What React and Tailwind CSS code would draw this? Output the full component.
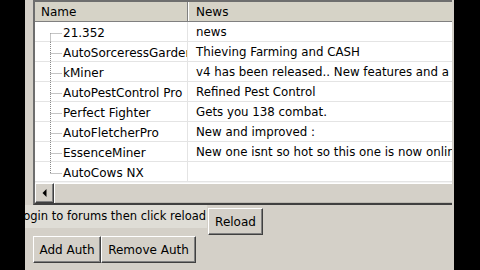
import React from 'react';

const rows = [
  { name: '21.352', news: 'news' },
  { name: 'AutoSorceressGarden', news: 'Thieving Farming and CASH' },
  { name: 'kMiner', news: 'v4 has been released.. New features and a lot more' },
  { name: 'AutoPestControl Pro', news: 'Refined Pest Control' },
  { name: 'Perfect Fighter', news: 'Gets you 138 combat.' },
  { name: 'AutoFletcherPro', news: 'New and improved :' },
  { name: 'EssenceMiner', news: 'New one isnt so hot so this one is now online' },
  { name: 'AutoCows NX', news: '' },
];

// dotted tree connector for one row
const TreeLine = ({ first, last }) => (
  <svg width="28" height="20" className="shrink-0">
    <line
      x1="15.5"
      y1={first ? 11.5 : 0}
      x2="15.5"
      y2={last ? 11.5 : 20}
      stroke="#8a8a8a"
      strokeDasharray="1 1"
    />
    <line x1="15.5" y1="11.5" x2="27" y2="11.5" stroke="#8a8a8a" strokeDasharray="1 1" />
  </svg>
);

const Win98Button = ({ children, className = '' }) => (
  <button
    className={`bg-[#d4d0c8] border border-t-white border-l-white border-r-[#404040] border-b-[#404040] shadow-[inset_-1px_-1px_0_#808080] text-black text-[12px] flex items-center justify-center ${className}`}
  >
    {children}
  </button>
);

export default function App() {
  return (
    <div
      className="w-[480px] h-[270px] bg-black flex overflow-hidden"
      style={{ fontFamily: '"DejaVu Sans", Verdana, sans-serif' }}
    >
      <div className="w-[25px] shrink-0 bg-black" />

      <div className="w-[429px] shrink-0 h-full bg-[#d4d0c8] flex flex-col overflow-hidden">
        {/* list view */}
        <div className="ml-[8px] mr-[2px] h-[205px] shrink-0 flex flex-col bg-white border-t-2 border-l-2 border-b-2 border-t-[#6e6e6e] border-l-[#6e6e6e] border-b-[#404040] overflow-hidden">
          {/* header */}
          <div className="h-[20px] shrink-0 flex bg-[#d6d3c7] border-b border-b-[#808080] text-[12px] text-black">
            <div className="w-[153px] shrink-0 flex items-center pt-px pl-[6px] border-r border-r-[#808080]">Name</div>
            <div className="flex-1 flex items-center pt-px pl-[7px] border-l border-l-white">News</div>
          </div>

          {/* rows */}
          <div className="h-[160px] shrink-0 flex flex-col text-black">
            {rows.map((r, i) => (
              <div key={i} className="h-[20px] shrink-0 flex shadow-[inset_0_-1px_0_#e4e4e4]">
                <div className="w-[153px] shrink-0 flex items-center overflow-hidden whitespace-nowrap border-r border-r-[#e4e4e4] text-[12px]">
                  <TreeLine first={i === 0} last={i === rows.length - 1} />
                  <span className="pt-[2px]">{r.name}</span>
                </div>
                <div className="flex-1 flex items-center pt-[2px] pl-[8px] overflow-hidden whitespace-nowrap text-[11.8px]">{r.news}</div>
              </div>
            ))}
          </div>

          {/* horizontal scrollbar */}
          <div className="h-[21px] shrink-0 flex border-t border-t-[#f4f4f4]">
            <div className="w-[19px] shrink-0 bg-[#d4d0c8] border border-t-white border-l-white border-r-[#404040] border-b-[#404040] shadow-[inset_-1px_-1px_0_#808080] flex items-center justify-center">
              <svg width="5" height="8" viewBox="0 0 5 8">
                <path d="M4.5 0 L0.5 4 L4.5 8 Z" fill="#000" />
              </svg>
            </div>
            <div className="flex-1 bg-[#d4d0c8] border-t border-l border-t-white border-l-white shadow-[inset_0_-1px_0_#bdbab2]" />
          </div>
        </div>

        {/* login row */}
        <div className="h-[31px] shrink-0 flex items-start">
          <div className="-ml-[8px] w-[190px] h-[23px] shrink-0 bg-[#dfddd6] flex items-center pt-px whitespace-nowrap text-[11.5px] text-black">
            Login to forums then click reload
          </div>
          <Win98Button className="mt-[3px] ml-[1px] w-[55px] h-[27px]">Reload</Win98Button>
        </div>

        {/* auth buttons */}
        <div className="flex pl-[8px]">
          <Win98Button className="w-[68px] h-[27px] text-[12.5px]">Add Auth</Win98Button>
          <Win98Button className="w-[95px] h-[27px] text-[12.5px]">Remove Auth</Win98Button>
        </div>
      </div>

      <div className="flex-1 bg-black" />
    </div>
  );
}
